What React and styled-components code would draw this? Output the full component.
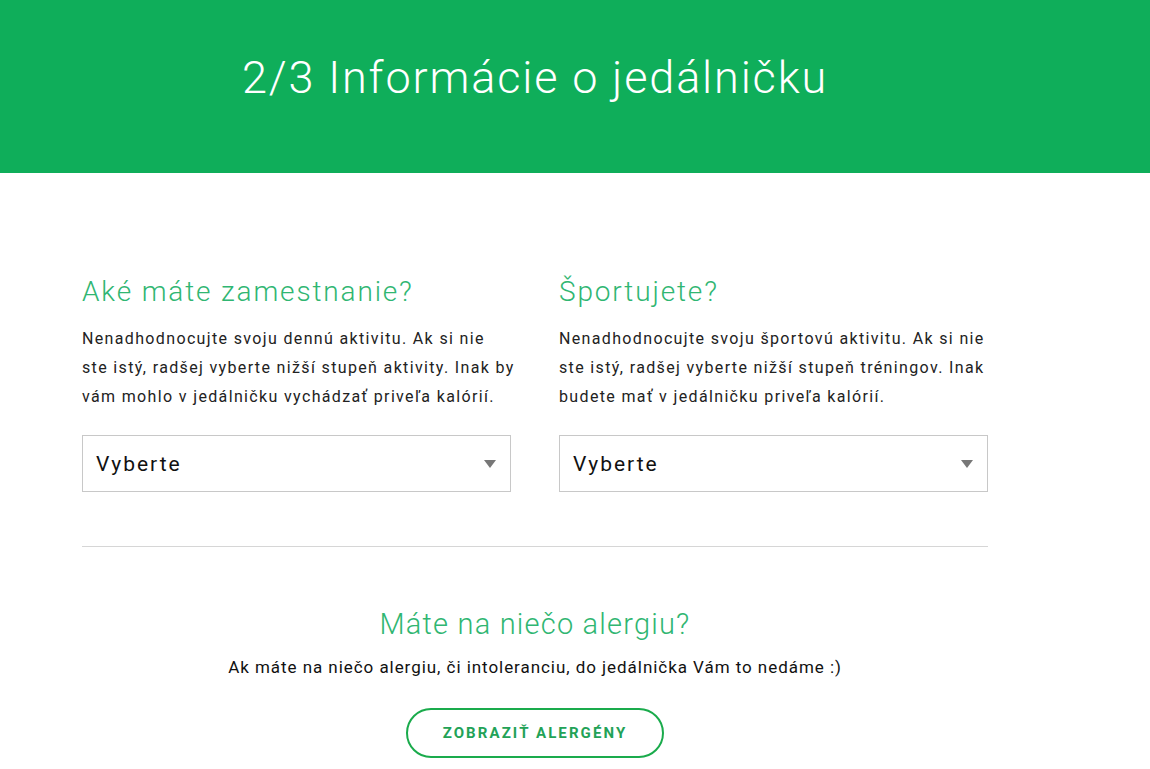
import React from 'react';
import styled, { createGlobalStyle } from 'styled-components';

const GlobalStyle = createGlobalStyle`
   body {
      margin: 0;
      background: #ffffff;
      font-family: Roboto, "Liberation Sans", sans-serif;
      color: #222;
   }
`

const Header = styled.header`
   background-color: #0fae5a;
   height: 173px;
   padding-left: 242px;
   display: flex;
   align-items: center;

   h1 {
      margin: 0 0 18px;
      font-weight: 300;
      font-size: 45px;
      letter-spacing: 1.85px;
      color: #fff;
   }
`

const Main = styled.main`
   width: 906px;
   padding: 100px 0 0 82px;
`

const Columns = styled.div`
   display: grid;
   grid-template-columns: 429px 429px;
   column-gap: 48px;
   padding-bottom: 54px;
   border-bottom: 1px solid #d6d6d6;
`

const Question = styled.h2`
   margin: 0 0 13px;
   font-size: 28px;
   font-weight: 300;
   letter-spacing: 1.85px;
   color: #30b672;
   line-height: 38px;
   white-space: nowrap;
`

const Text = styled.p`
   margin: 0 0 24px;
   font-size: 16px;
   letter-spacing: 1.35px;
   line-height: 29px;
   color: #222;
   white-space: nowrap;
`

const Select = styled.div`
   height: 57px;
   box-sizing: border-box;
   border: 1px solid #c8c8c8;
   display: flex;
   align-items: center;
   justify-content: space-between;
   padding: 0 14px 0 13px;
   font-size: 21px;
   letter-spacing: 2px;
   color: #111;

   &::after {
      content: '';
      border-left: 6px solid transparent;
      border-right: 6px solid transparent;
      border-top: 8px solid #777;
   }
`

const Allergy = styled.section`
   display: flex;
   flex-direction: column;
   align-items: center;
   padding-top: 58px;
`

const AllergyTitle = styled(Question)`
   font-size: 29px;
   letter-spacing: 1.2px;
   margin-bottom: 14px;
`

const AllergyText = styled.p`
   margin: 0 0 31px;
   font-size: 17px;
   letter-spacing: 0.95px;
   color: #111;
   white-space: nowrap;
`

const Button = styled.button`
   width: 258px;
   height: 50px;
   border: 2px solid #1aab4c;
   border-radius: 25px;
   background: #fff;
   color: #22a257;
   font-family: Roboto, sans-serif;
   font-weight: 700;
   font-size: 15px;
   letter-spacing: 2.1px;
   text-transform: uppercase;
`

function App() {
   return (
      <>
         <GlobalStyle />
         <Header>
            <h1>2/3 Informácie o jedálničku</h1>
         </Header>
         <Main>
            <Columns>
               <div>
                  <Question>Aké máte zamestnanie?</Question>
                  <Text>
                     Nenadhodnocujte svoju dennú aktivitu. Ak si nie<br />
                     ste istý, radšej vyberte nižší stupeň aktivity. Inak by<br />
                     vám mohlo v jedálničku vychádzať priveľa kalórií.
                  </Text>
                  <Select>Vyberte</Select>
               </div>
               <div>
                  <Question>Športujete?</Question>
                  <Text>
                     Nenadhodnocujte svoju športovú aktivitu. Ak si nie<br />
                     ste istý, radšej vyberte nižší stupeň tréningov. Inak<br />
                     budete mať v jedálničku priveľa kalórií.
                  </Text>
                  <Select>Vyberte</Select>
               </div>
            </Columns>
            <Allergy>
               <AllergyTitle>Máte na niečo alergiu?</AllergyTitle>
               <AllergyText>Ak máte na niečo alergiu, či intoleranciu, do jedálnička Vám to nedáme :)</AllergyText>
               <Button>Zobraziť alergény</Button>
            </Allergy>
         </Main>
      </>
   )
}

export default App
